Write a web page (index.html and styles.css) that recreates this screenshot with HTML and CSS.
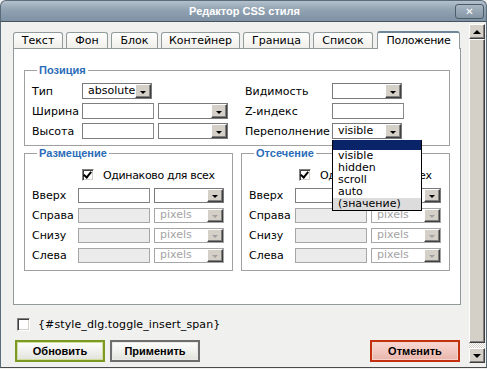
FILE: index.html
```html
<!DOCTYPE html>
<html lang="ru">
<head>
<meta charset="utf-8">
<title>Редактор CSS стиля</title>
<link rel="stylesheet" href="styles.css">
</head>
<body>
<div class="win">
  <div class="titlebar">
    <span></span>
    <span class="title">Редактор CSS стиля</span>
    <span class="close">✕</span>
  </div>
  <div class="frame">
    <div class="main">
      <div class="tabs">
        <span class="tab">Текст</span>
        <span class="tab">Фон</span>
        <span class="tab">Блок</span>
        <span class="tab">Контейнер</span>
        <span class="tab">Граница</span>
        <span class="tab">Список</span>
        <span class="tab active">Положение</span>
      </div>
      <div class="panel">
        <fieldset class="fs fs-pos">
          <legend>Позиция</legend>
          <div class="pos-grid">
            <span class="lbl">Тип</span>
            <span class="sel"><span class="val">absolute</span><span class="arr"></span></span>
            <span></span>
            <span class="lbl">Видимость</span>
            <span class="sel"><span class="val"></span><span class="arr"></span></span>

            <span class="lbl">Ширина</span>
            <span class="inp"></span>
            <span class="sel"><span class="val"></span><span class="arr"></span></span>
            <span class="lbl">Z-индекс</span>
            <span class="inp"></span>

            <span class="lbl">Высота</span>
            <span class="inp"></span>
            <span class="sel"><span class="val"></span><span class="arr"></span></span>
            <span class="lbl">Переполнение</span>
            <span class="sel"><span class="val">visible</span><span class="arr"></span></span>
          </div>
        </fieldset>
        <div class="pair">
          <fieldset class="fs fs-half">
            <legend>Размещение</legend>
            <div class="same"><span class="cb checked"></span><span>Одинаково для всех</span></div>
            <div class="box-grid">
              <span class="lbl">Вверх</span>
              <span class="inp"></span>
              <span class="sel"><span class="val"></span><span class="arr"></span></span>
              <span class="lbl">Справа</span>
              <span class="inp dis"></span>
              <span class="sel dis"><span class="val">pixels</span><span class="arr"></span></span>
              <span class="lbl">Снизу</span>
              <span class="inp dis"></span>
              <span class="sel dis"><span class="val">pixels</span><span class="arr"></span></span>
              <span class="lbl">Слева</span>
              <span class="inp dis"></span>
              <span class="sel dis"><span class="val">pixels</span><span class="arr"></span></span>
            </div>
          </fieldset>
          <fieldset class="fs fs-half">
            <legend>Отсечение</legend>
            <div class="same"><span class="cb checked"></span><span>Одинаково для всех</span></div>
            <div class="box-grid">
              <span class="lbl">Вверх</span>
              <span class="inp"></span>
              <span class="sel"><span class="val"></span><span class="arr"></span></span>
              <span class="lbl">Справа</span>
              <span class="inp dis"></span>
              <span class="sel dis"><span class="val">pixels</span><span class="arr"></span></span>
              <span class="lbl">Снизу</span>
              <span class="inp dis"></span>
              <span class="sel dis"><span class="val">pixels</span><span class="arr"></span></span>
              <span class="lbl">Слева</span>
              <span class="inp dis"></span>
              <span class="sel dis"><span class="val">pixels</span><span class="arr"></span></span>
            </div>
          </fieldset>
        </div>
        <ul class="dropdown">
          <li class="hl"></li>
          <li>visible</li>
          <li>hidden</li>
          <li>scroll</li>
          <li>auto</li>
          <li class="hover">(значение)</li>
        </ul>
      </div>
      <div class="opt"><span class="cb"></span><span class="opt-text">{#style_dlg.toggle_insert_span}</span></div>
      <div class="buttons">
        <button class="btn btn-ok">Обновить</button>
        <button class="btn">Применить</button>
        <button class="btn btn-cancel">Отменить</button>
      </div>
    </div>
    <div class="scroll">
      <span class="sbtn"><span class="up"></span></span>
      <span class="thumb"></span>
      <span class="track"></span>
      <span class="sbtn"><span class="down"></span></span>
    </div>
  </div>
</div>
</body>
</html>
```

FILE: styles.css
```css
* { box-sizing: border-box; }
html, body { margin: 0; padding: 0; }
body {
  width: 487px;
  height: 369px;
  overflow: hidden;
  background: #f0f0ee;
  font-family: "DejaVu Sans", Verdana, sans-serif;
  font-size: 11px;
  color: #000;
}
.win {
  width: 487px;
  height: 368px;
  display: flex;
  flex-direction: column;
}
.titlebar {
  height: 22px;
  flex: none;
  display: grid;
  grid-template-columns: 1fr auto 1fr;
  align-items: center;
  background: linear-gradient(#b3c1cc, #93a4b3 40%, #7d92a4);
  border: 1px solid #5a6b79;
  border-bottom-color: #46525e;
  border-radius: 6px 6px 0 0;
}
.title {
  font-family: "Liberation Sans", Arial, sans-serif;
  font-weight: bold;
  font-size: 11px;
  color: #fff;
  padding-left: 2px;
}
.close {
  justify-self: end;
  margin-right: 2px;
  width: 29px;
  height: 15px;
  border: 1px solid #4d5c69;
  border-radius: 3px;
  background: linear-gradient(#a8b6c2, #8596a6);
  color: #fff;
  font-family: "DejaVu Sans", sans-serif;
  font-weight: bold;
  font-size: 10px;
  line-height: 13px;
  text-align: center;
}
.frame {
  flex: 1;
  display: flex;
  border-left: 1px solid #5a6b79;
  border-right: 1px solid #5a6b79;
  border-bottom: 1px solid #4a4a4a;
}
.main {
  flex: 1;
  padding: 9px 0 0 12px;
}
.tabs {
  display: flex;
  align-items: flex-end;
  height: 17px;
  gap: 3px;
}
.tab {
  height: 16px;
  padding: 0;
  text-align: center;
  border: 1px solid #919b9c;
  border-bottom: none;
  border-radius: 3px 3px 0 0;
  background: linear-gradient(#fefefe, #f0efea);
  line-height: 15px;
  white-space: nowrap;
}
.tab:nth-child(1) { width: 50px; }
.tab:nth-child(2) { width: 42px; }
.tab:nth-child(3) { width: 47px; }
.tab:nth-child(4) { width: 79px; }
.tab:nth-child(5) { width: 67px; }
.tab:nth-child(6) { width: 60px; }
.tab.active {
  width: 83px;
  height: 18px;
  margin-bottom: -1px;
  margin-left: 1px;
  position: relative;
  z-index: 1;
  background: #fff;
  border-top: 2px solid #6f8699;
  line-height: 16px;
  letter-spacing: -0.3px;
}
.panel {
  position: relative;
  width: 448px;
  height: 257px;
  border: 1px solid #919b9c;
  background: #fff;
  padding: 0 0 0 10px;
}
.fs {
  margin: 0;
  border: 1px solid #a0a0a0;
  min-width: 0;
}
.fs legend {
  font-family: "Liberation Sans", Arial, sans-serif;
  font-weight: bold;
  font-size: 11px;
  line-height: 12px;
  color: #2a6cb8;
  padding: 0 2px;
  margin-left: 5px;
}
.fs-pos {
  width: 426px;
  margin-top: 15px;
  padding: 7px 0 6px 7px;
}
.pos-grid {
  display: grid;
  grid-template-columns: 50px 76px 87px 87px auto;
  grid-auto-rows: 16px;
  row-gap: 4px;
  align-items: center;
}
.lbl { white-space: nowrap; line-height: 13px; }
.inp {
  display: block;
  width: 72px;
  height: 16px;
  border: 1px solid #7f7f7f;
  border-right-color: #8a8a8a;
  background: #fff;
}
.sel {
  display: flex;
  width: 70px;
  height: 16px;
  border: 1px solid #7a7a7a;
  background: #fff;
}
.sel .val {
  flex: 1;
  padding-left: 5px;
  line-height: 13px;
  overflow: hidden;
}
.sel .arr {
  width: 16px;
  flex: none;
  background: #d4d0c8;
  border: 1px solid;
  border-color: #fff #404040 #404040 #fff;
  box-shadow: inset -1px -1px 0 #808080;
  display: flex;
  align-items: center;
  justify-content: center;
}
.sel .arr::after {
  content: "";
  border-left: 3px solid transparent;
  border-right: 3px solid transparent;
  border-top: 3px solid #000;
  margin-top: 2px;
}
.sel.dis .val { color: #a3a3a3; }
.sel.dis .arr::after { border-top-color: #a0a0a0; }
.inp.dis { background: #ebebeb; border-color: #a6a6a6; }
.sel.dis { border-color: #a6a6a6; }
.pair {
  display: flex;
  gap: 8px;
  margin-top: 1px;
}
.fs-half {
  width: 209px;
  padding: 10px 0 7px 7px;
}
.same {
  display: flex;
  align-items: center;
  gap: 9px;
  margin-left: 50px;
  height: 12px;
  letter-spacing: -0.35px;
  white-space: nowrap;
}
.cb {
  display: inline-block;
  width: 12px;
  height: 12px;
  flex: none;
  border: 1px solid;
  border-color: #808080 #fff #fff #808080;
  box-shadow: inset 1px 1px 0 #404040, inset -1px -1px 0 #d4d0c8;
  background: #fff;
  position: relative;
}
.cb.checked::after {
  content: "";
  position: absolute;
  left: 2px;
  top: 0px;
  width: 3px;
  height: 6px;
  border: solid #000;
  border-width: 0 2px 2px 0;
  transform: rotate(40deg);
}
.box-grid {
  display: grid;
  grid-template-columns: 46px 76px 70px;
  grid-auto-rows: 15px;
  row-gap: 5px;
  align-items: center;
  margin-top: 7px;
}
.box-grid .inp, .box-grid .sel { height: 15px; }
.box-grid .sel .val { line-height: 12px; }
.dropdown {
  position: absolute;
  left: 318px;
  top: 91px;
  width: 90px;
  margin: 0;
  padding: 0;
  list-style: none;
  border: 1px solid #000;
  border-top-color: #0a246a;
  background: #fff;
  z-index: 2;
}
.dropdown li {
  height: 12px;
  line-height: 12px;
  padding-left: 5px;
}
.dropdown li.hl { height: 9px; background: #0a246a; }
.dropdown li.hover { background: #dcdcdc; }
.opt {
  display: flex;
  align-items: center;
  gap: 8px;
  margin: 13px 0 0 4px;
  height: 13px;
}
.opt .cb { width: 13px; height: 13px; }
.opt-text { letter-spacing: 0.1px; }
.buttons {
  display: flex;
  width: 445px;
  margin: 9px 0 0 2px;
}
.btn {
  width: 90px;
  height: 22px;
  padding: 0;
  margin: 0;
  font-family: "Liberation Sans", Arial, sans-serif;
  font-weight: bold;
  font-size: 11px;
  color: #000;
  border: 2px solid #6e6e6e;
  box-shadow: inset 0 0 0 1px #e8e8e8;
  background: linear-gradient(#fdfdfd, #eeeeea 60%, #e2e2dc);
}
.btn + .btn { margin-left: 5px; }
.btn-ok {
  border-color: #7b9a23;
  box-shadow: inset 0 0 0 1px #d2dea0;
}
.btn-cancel {
  margin-left: auto !important;
  border-color: #c4300e;
  box-shadow: inset 0 0 0 1px #f5d4cc;
  background: linear-gradient(#f8d8d2, #f0c4bc 60%, #e8b4aa);
}
.scroll {
  width: 16px;
  flex: none;
  display: flex;
  flex-direction: column;
  padding-top: 2px;
  margin-right: 1px;
}
.sbtn {
  height: 15px;
  flex: none;
  background: #d4d0c8;
  border: 1px solid;
  border-color: #fff #404040 #404040 #fff;
  box-shadow: inset -1px -1px 0 #808080;
  display: flex;
  align-items: center;
  justify-content: center;
}
.up {
  border-left: 4px solid transparent;
  border-right: 4px solid transparent;
  border-bottom: 4px solid #000;
}
.down {
  border-left: 4px solid transparent;
  border-right: 4px solid transparent;
  border-top: 4px solid #000;
}
.thumb {
  flex: 1;
  background: #d4d0c8;
  border: 1px solid;
  border-color: #fff #404040 #404040 #fff;
  box-shadow: inset -1px -1px 0 #808080;
}
.track {
  height: 5px;
  flex: none;
  background: repeating-conic-gradient(#fff 0 25%, #d4d0c8 0 50%) 0 0 / 2px 2px;
}
.scroll .sbtn:last-child { margin-bottom: 4px; }
```
